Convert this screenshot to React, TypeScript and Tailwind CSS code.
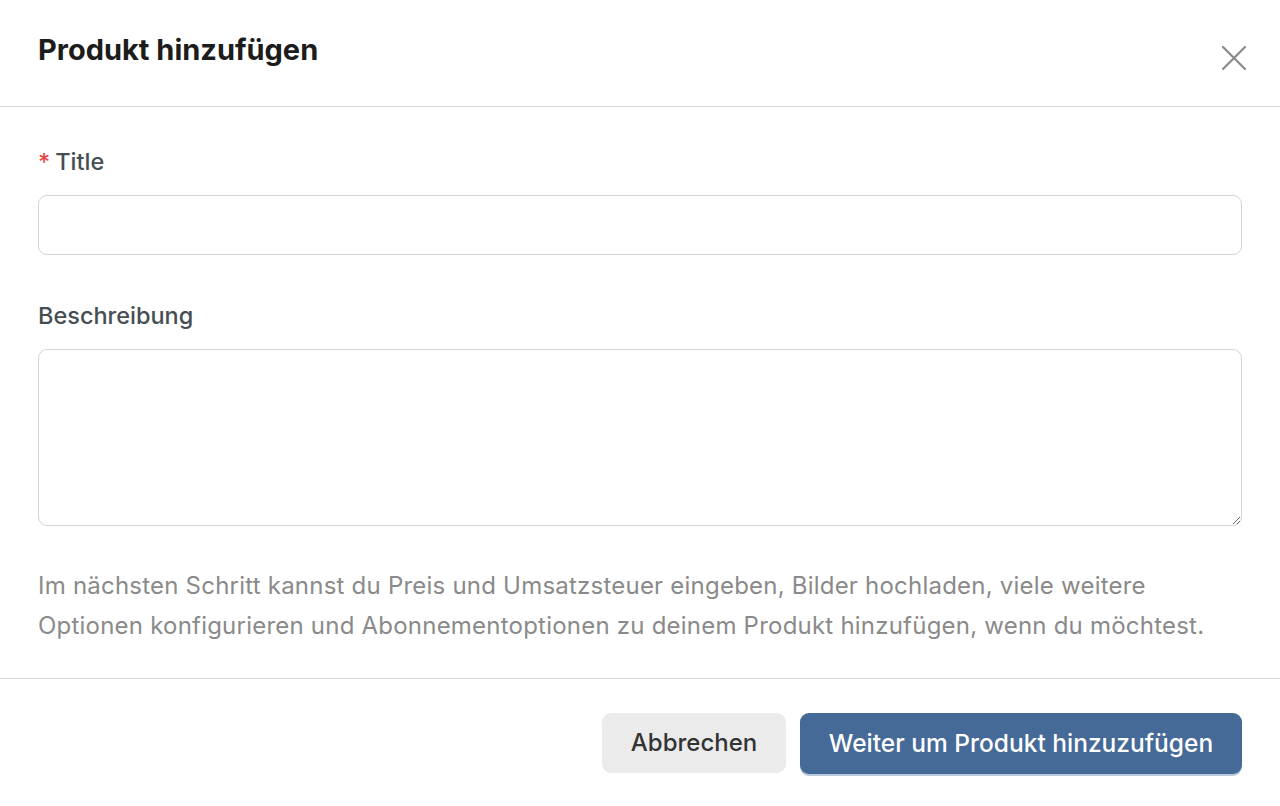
const font = { fontFamily: 'Inter, "Noto Sans", sans-serif' }

export default function App() {
  return (
    <div className="flex h-[806px] w-[1280px] flex-col bg-white text-[#1f1f1f]" style={font}>
      <header className="flex h-[107px] shrink-0 items-start justify-between border-b border-[#d9d9d9] pl-[38px] pr-[34px]">
        <h1 className="pt-[33px] text-[29px] font-bold leading-[34px] text-[#1c1c1c]">
          Produkt hinzufügen
        </h1>
        <button type="button" className="mt-[46px] text-[#8a8a8a]" aria-label="Schließen">
          <svg viewBox="0 0 24 24" className="size-[24px]" fill="none" stroke="currentColor" strokeWidth={2.2} strokeLinecap="round">
            <path d="M1 1 23 23M23 1 1 23" />
          </svg>
        </button>
      </header>

      <main className="flex flex-col border-b border-[#d9d9d9] px-[38px] pb-[32px] pt-[40px]">
        <label className="mb-[18px] flex items-center text-[23.5px] font-medium leading-[30px] text-[#454e53]">
          <span className="mr-[5px] text-[#e5484d]">*</span>
          Title
        </label>
        <input
          type="text"
          className="h-[60px] w-full rounded-[9px] border border-[#d4d4d4] px-4 text-[22px] outline-none"
        />

        <label className="mb-[18px] mt-[46px] text-[23.5px] font-medium leading-[30px] text-[#454e53]">
          Beschreibung
        </label>
        <textarea className="h-[177px] w-full rounded-[9px] border border-[#d4d4d4] px-4 py-3 text-[22px] outline-none" />

        <p className="mt-[40px] whitespace-nowrap text-[24px] leading-[40px] tracking-[0.22px] text-[#8a8a8a]">
          Im nächsten Schritt kannst du Preis und Umsatzsteuer eingeben, Bilder hochladen, viele weitere
          <br />
          Optionen konfigurieren und Abonnementoptionen zu deinem Produkt hinzufügen, wenn du möchtest.
        </p>
      </main>

      <footer className="flex justify-end gap-[14px] px-[38px] pt-[34px]">
        <button
          type="button"
          className="h-[60px] w-[184px] rounded-[9px] bg-[#ebebeb] text-[24px] font-medium text-[#333333]"
        >
          Abbrechen
        </button>
        <button
          type="button"
          className="h-[61px] w-[442px] rounded-[9px] bg-[#466a98] text-[24.5px] font-medium text-white shadow-[0_2px_0_#b9c9dc]"
        >
          Weiter um Produkt hinzuzufügen
        </button>
      </footer>
    </div>
  )
}
